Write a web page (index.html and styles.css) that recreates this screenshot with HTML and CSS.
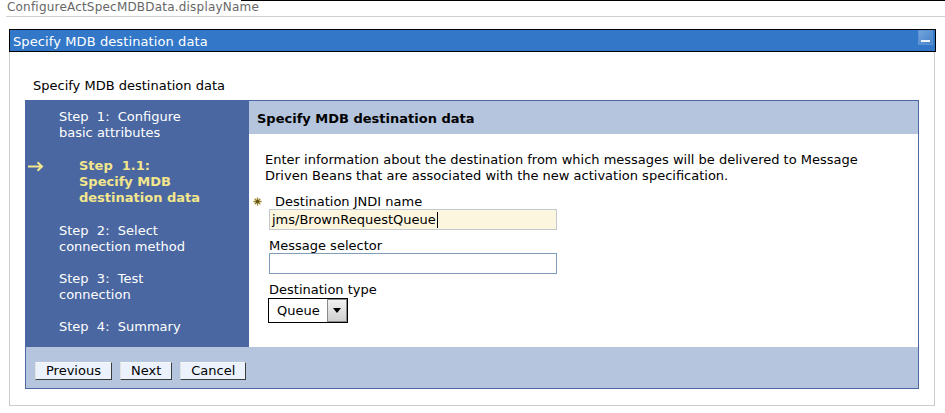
FILE: index.html
```html
<!DOCTYPE html>
<html>
<head>
<meta charset="utf-8">
<title>ConfigureActSpecMDBData</title>
<link rel="stylesheet" href="styles.css">
</head>
<body>
<div class="top">
  <span class="top-title">ConfigureActSpecMDBData.displayName</span>
  <span class="top-rule"></span>
</div>
<div class="portlet">
  <div class="bar">
    <span class="bar-title">Specify MDB destination data</span>
    <span class="minimize"><span class="minimize-line"></span></span>
  </div>
  <div class="pbody">
    <div class="subtitle">Specify MDB destination data</div>
    <div class="wizard">
      <div class="nav">
        <div class="step"><span class="mark"></span><span>Step&nbsp;&nbsp;1:&nbsp;&nbsp;Configure<br>basic attributes</span></div>
        <div class="step current"><span class="mark sub"><svg class="arrow" width="17" height="11" viewBox="0 0 17 11"><path d="M1 5.5H15M10.5 1.2L15 5.5 10.5 9.8" fill="none" stroke="#f3e68c" stroke-width="2"/></svg></span><span>Step&nbsp;&nbsp;1.1:<br>Specify MDB<br>destination data</span></div>
        <div class="step"><span class="mark"></span><span>Step&nbsp;&nbsp;2:&nbsp;&nbsp;Select<br>connection method</span></div>
        <div class="step"><span class="mark"></span><span>Step&nbsp;&nbsp;3:&nbsp;&nbsp;Test<br>connection</span></div>
        <div class="step"><span class="mark"></span><span>Step&nbsp;&nbsp;4:&nbsp;&nbsp;Summary</span></div>
      </div>
      <div class="content">
        <div class="chead">Specify MDB destination data</div>
        <div class="cbody">
          <p class="desc">Enter information about the destination from which messages will be delivered to Message Driven Beans that are associated with the new activation specification.</p>
          <div class="fields">
            <div class="label req"><svg class="star" width="9" height="9" viewBox="0 0 9 9"><g stroke="#9a8530" stroke-width="1.3"><path d="M4.5 0.5V8.5M0.5 4.5H8.5M1.7 1.7L7.3 7.3M7.3 1.7L1.7 7.3"/></g><circle cx="4.5" cy="4.5" r="1.6" fill="#5c4e14"/></svg><span>Destination JNDI name</span></div>
            <div class="field focused">jms/BrownRequestQueue<span class="caret"></span></div>
            <div class="label">Message selector</div>
            <div class="field"></div>
            <div class="label">Destination type</div>
            <div class="select"><span class="select-value">Queue</span><span class="select-btn"><span class="tri"></span></span></div>
          </div>
        </div>
      </div>
      <div class="footer">
        <button class="btn">Previous</button>
        <button class="btn">Next</button>
        <button class="btn">Cancel</button>
      </div>
    </div>
  </div>
</div>
</body>
</html>
```
FILE: styles.css
```css
* { box-sizing: border-box; }
html, body { margin: 0; padding: 0; background: #fff; }
body {
  font-family: "DejaVu Sans", Verdana, sans-serif;
  font-size: 13px;
  color: #000;
  width: 945px;
  height: 413px;
  overflow: hidden;
}
.top {
  display: flex;
  height: 17px;
  margin-left: 6px;
  border-bottom: 1px solid #d0d0d0;
}
.top-title {
  font-size: 12px;
  letter-spacing: 0.2px;
  line-height: 15px;
  color: #676767;
  padding-left: 1px;
  white-space: nowrap;
}
.top-rule {
  flex: 1;
  height: 0;
  border-top: 1px solid #000;
  margin-left: -18px;
}
.portlet {
  margin: 12px 10px 0 9px;
}
.bar {
  display: flex;
  align-items: flex-start;
  justify-content: space-between;
  height: 23px;
  margin-right: -1px;
  background: #3277c8;
  border: 1px solid #000;
  color: #fff;
  padding: 0 2px 0 3px;
}
.bar-title {
  padding-top: 4px;
  line-height: 16px;
  letter-spacing: 0.1px;
}
.minimize {
  width: 15px;
  height: 15px;
  background: linear-gradient(135deg, #74a5de 0%, #5a91d2 55%, #4a84c8 100%);
  border: 1px solid #5d93d3;
  position: relative;
}
.minimize-line {
  position: absolute;
  left: 2px;
  top: 9px;
  width: 9px;
  height: 2px;
  background: #eef4fc;
}
.pbody {
  border: 1px solid #cccccc;
  border-top: 0;
  padding: 26px 15px 16px 15px;
}
.subtitle {
  margin-left: 8px;
  line-height: 16px;
  margin-bottom: 6px;
}
.wizard {
  display: grid;
  grid-template-columns: 223px 1fr;
  border: 1px solid #4a67a1;
}
.nav {
  background: #4a67a1;
  color: #fff;
  line-height: 16px;
  padding: 8px 0 12px;
  display: flex;
  flex-direction: column;
  gap: 16px;
}
.step { display: flex; }
.mark { width: 33px; flex: none; }
.mark.sub { width: 53px; }
.current {
  color: #f3e68c;
  font-weight: bold;
  margin: 1px 0;
}
.arrow {
  display: block;
  margin: 3px 0 0 1px;
}
.content { background: #fff; }
.chead {
  background: #b5c5de;
  height: 33px;
  padding: 2px 0 0 8px;
  line-height: 31px;
  font-weight: bold;
}
.cbody {
  padding: 18px 16px 0 16px;
}
.desc {
  margin: 0 0 11px;
  line-height: 16px;
}
.fields {
  margin-left: 4px;
  display: flex;
  flex-direction: column;
  align-items: flex-start;
}
.label {
  line-height: 14px;
  height: 14px;
  white-space: nowrap;
}
.label.req {
  display: flex;
  margin-left: -16px;
}
.star {
  flex: none;
  margin: 2px 13px 0 0;
}
.field {
  width: 288px;
  height: 21px;
  border: 1px solid #7f9db9;
  background: #fff;
  margin-bottom: 9px;
  padding-left: 2px;
  line-height: 19px;
  display: flex;
  align-items: center;
}
.field.focused {
  background: #fdf6de;
  border-color: #c3c9d1;
}
.caret {
  display: inline-block;
  width: 1px;
  height: 16px;
  background: #000;
  margin-left: 1px;
}
.select {
  display: flex;
  width: 80px;
  height: 25px;
  margin: 1px 0 0 -1px;
  border: 1px solid #000;
  background: #fff;
}
.select-value {
  flex: 1;
  padding-left: 8px;
  line-height: 23px;
}
.select-btn {
  width: 20px;
  height: 23px;
  border: 1px solid #8a8a8a;
  background: linear-gradient(#f2f2f2, #cfcfcf);
  display: flex;
  align-items: center;
  justify-content: center;
}
.tri {
  width: 0;
  height: 0;
  border-left: 4px solid transparent;
  border-right: 4px solid transparent;
  border-top: 5px solid #000;
}
.footer {
  grid-column: 1 / -1;
  background: #b5c5de;
  padding: 15px 9px 8px;
  display: flex;
  gap: 8px;
}
.btn {
  font-family: "DejaVu Sans", Verdana, sans-serif;
  font-size: 13px;
  color: #000;
  height: 18px;
  line-height: 16px;
  padding: 0 10px;
  margin: 0;
  background: #ebf2fc;
  border: 1px solid;
  border-color: #f6f6f6 #3c3c3c #3c3c3c #e2e2e2;
  border-radius: 0;
}
```
